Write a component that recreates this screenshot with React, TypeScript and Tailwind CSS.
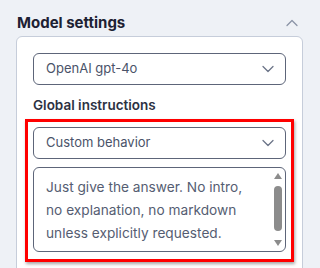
import React from "react";
import { ChevronDown, ChevronUp } from "lucide-react";

function SelectBox({ value }: { value: string }) {
  return (
    <div className="flex h-8 items-center justify-between rounded-md border border-[#5d6579] bg-white pl-3 pr-[7px]">
      <span className="text-[13px] text-[#4a5369]">{value}</span>
      <ChevronDown size={20} strokeWidth={1.5} className="text-[#6b7488]" />
    </div>
  );
}

function Scrollbar() {
  return (
    <div className="flex w-2 flex-col items-center pt-[5px] pb-[5px]">
      <div className="h-0 w-0 border-x-[4px] border-b-[6px] border-x-transparent border-b-[#8c8c8c]" />
      <div className="mt-[7px] w-2 flex-1 rounded-full bg-[#8c8c8c]" />
      <div className="mt-[9px] h-0 w-0 border-x-[4px] border-t-[6px] border-x-transparent border-t-[#8c8c8c]" />
    </div>
  );
}

export default function App() {
  const instructions =
    "Just give the answer. No intro, no explanation, no markdown unless explicitly requested.";

  return (
    <div
      className="h-[268px] w-[320px] overflow-hidden bg-[#eef1f6] pl-4 pr-[17px] pt-[11px]"
      style={{ fontFamily: "Inter, 'Noto Sans', sans-serif" }}
    >
      <div className="mb-px flex h-6 items-center justify-between pl-px">
        <h2 className="text-[15px] font-bold text-[#1d2133]">Model settings</h2>
        <ChevronUp size={20} strokeWidth={1.5} className="mr-px text-[#8b94a7]" />
      </div>

      <div className="h-[240px] rounded-md border border-[#c6cdda] bg-white px-4 pt-4">
        <SelectBox value="OpenAI gpt-4o" />

        <div className="mt-[10px] mb-1 text-[13.5px] font-semibold leading-5 text-[#2c3142]">
          Global instructions
        </div>

        <div className="-mx-2 border-[3px] border-[#ff0000] px-[5px] pt-[5px] pb-[7px] shadow-[1px_2px_3px_rgba(0,0,0,0.35)]">
          <SelectBox value="Custom behavior" />
          <div className="mt-2 flex h-[85px] rounded-md border border-[#5d6579] bg-white pr-[3px]">
            <p className="flex-1 pl-3 pr-6 pt-2 text-[13.7px] leading-[23px] text-[#555d72]">
              {instructions}
            </p>
            <Scrollbar />
          </div>
        </div>
      </div>
    </div>
  );
}
